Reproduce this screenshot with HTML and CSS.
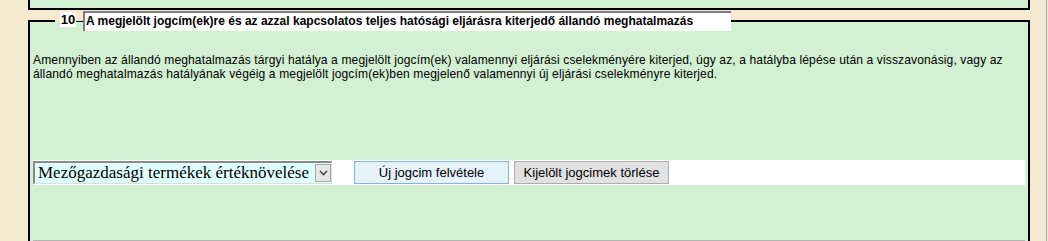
FILE: index.html
```html
<!DOCTYPE html>
<html lang="hu">
<head>
<meta charset="utf-8">
<title>Állandó meghatalmazás</title>
<link rel="stylesheet" href="styles.css">
</head>
<body>
<div class="page">
  <div class="top-box"></div>
  <fieldset class="section">
    <legend class="section-legend">
      <span class="legend-num">10</span><span class="legend-dash"></span><span class="legend-title">A megjelölt jogcím(ek)re és az azzal kapcsolatos teljes hatósági eljárásra kiterjedő állandó meghatalmazás</span>
    </legend>
    <p class="intro">Amennyiben az állandó meghatalmazás tárgyi hatálya a megjelölt jogcím(ek) valamennyi eljárási cselekményére kiterjed, úgy az, a hatályba lépése után a visszavonásig, vagy az állandó meghatalmazás hatályának végéig a megjelölt jogcím(ek)ben megjelenő valamennyi új eljárási cselekményre kiterjed.</p>
    <div class="toolbar">
      <div class="select">
        <span class="select-value">Mezőgazdasági termékek értéknövelése</span>
        <span class="select-arrow"><svg width="9" height="6" viewBox="0 0 9 6"><path d="M1 1 L4.5 4.5 L8 1" fill="none" stroke="#4a4a4a" stroke-width="1.6"/></svg></span>
      </div>
      <button class="btn btn-primary" type="button">Új jogcim felvétele</button>
      <button class="btn" type="button">Kijelölt jogcimek törlése</button>
    </div>
    <div class="next-table"></div>
  </fieldset>
</div>
</body>
</html>
```
FILE: styles.css
```css
html, body {
  margin: 0;
  padding: 0;
}
body {
  background: #f4ead0;
  font-family: "Liberation Sans", Arial, sans-serif;
  overflow: hidden;
}
.page {
  width: 1047px;
  height: 241px;
  box-sizing: border-box;
  padding-left: 28px;
  border-right: 1px solid #a9a9a9;
}
.top-box {
  height: 8px;
  box-sizing: content-box;
  width: 998px;
  border: 2px solid #000;
  border-top: none;
  background: #d3f0d3;
}
.section {
  margin: 1px 0 0 0;
  width: 1002px;
  box-sizing: border-box;
  border: 2px solid #000;
  background: #d3f0d3;
  padding: 0 3px;
  min-inline-size: 0;
}
.section-legend {
  margin-left: 22px;
  padding: 0 0 0 5px;
  display: flex;
  align-items: flex-start;
  height: 20px;
}
.legend-num {
  background: #fff;
  font-weight: bold;
  font-size: 13px;
  line-height: 15px;
  height: 15px;
  margin-top: 1px;
  width: 16px;
  text-align: center;
}
.legend-dash {
  width: 7px;
  height: 0;
  border-top: 1px solid #000;
  margin-top: 10px;
}
.legend-title {
  background: #fff;
  font-weight: bold;
  font-size: 12px;
  line-height: 17px;
  height: 18px;
  width: 645px;
  padding-left: 1px;
  border-top: 2px solid #7f7f7f;
  border-left: 2px solid #7f7f7f;
  white-space: nowrap;
}
.intro {
  margin: 22px 0 0 0;
  font-size: 12.05px;
  line-height: 14px;
  letter-spacing: 0.01em;
  color: #000;
}
.toolbar {
  margin-top: 79px;
  background: #fff;
  height: 25px;
  display: flex;
  align-items: center;
}
.select {
  width: 299px;
  height: 23px;
  box-sizing: border-box;
  display: flex;
  align-items: center;
  background: #e0ffff;
  border-top: 2px solid #8a8a8a;
  border-left: 2px solid #8a8a8a;
  border-right: 1px solid #dcdcdc;
  border-bottom: 1px solid #dcdcdc;
  font-family: "Liberation Serif", "Times New Roman", serif;
  font-size: 17px;
  padding-left: 3px;
}
.select-value {
  flex: 1;
  white-space: nowrap;
}
.select-arrow {
  width: 16px;
  height: 18px;
  box-sizing: border-box;
  border: 1px solid #a6a6a6;
  background: #e6e6e6;
  display: flex;
  align-items: center;
  justify-content: center;
}
.btn {
  height: 23px;
  width: 155px;
  box-sizing: border-box;
  margin: 0 0 0 5px;
  padding: 0;
  border: 1px solid #adadad;
  background: #e1e1e1;
  font-family: "Liberation Sans", Arial, sans-serif;
  font-size: 13px;
  color: #000;
}
.btn-primary {
  margin-left: 22px;
  border-color: #7eb4ea;
  background: #e5f1fb;
}
.next-table {
  margin-top: 55px;
  border-top: 1px solid #b4b4b4;
  height: 10px;
}
```
